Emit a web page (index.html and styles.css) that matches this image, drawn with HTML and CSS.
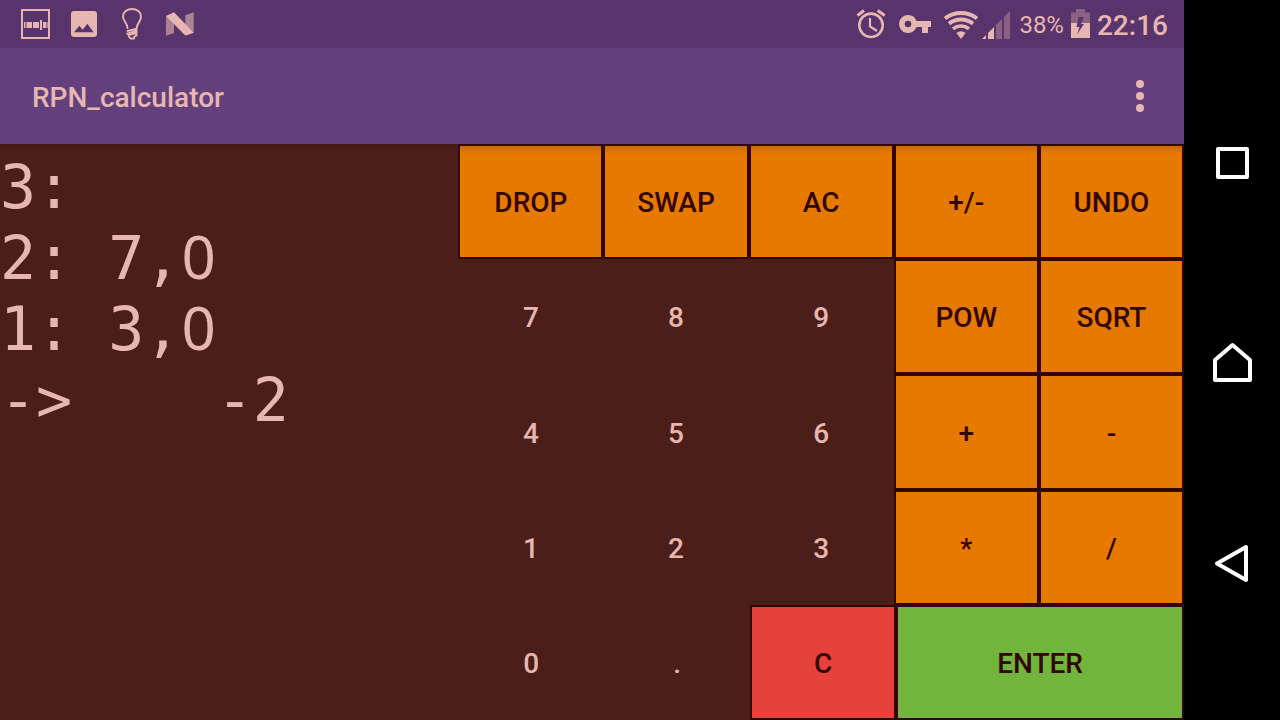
FILE: index.html
```html
<!DOCTYPE html>
<html lang="en">
<head>
<meta charset="utf-8">
<title>RPN_calculator</title>
<link rel="stylesheet" href="styles.css">
</head>
<body>
<div class="device">
  <div class="screen">
    <div class="status">
      <div class="status-group">
        <svg width="48" height="48" viewBox="0 0 48 48"><rect x="10" y="10" width="27" height="28" fill="none" stroke="currentColor" stroke-width="2"/><path fill="currentColor" d="M12 22h1v6h-1zM13.500 22h1v6h-1zM15 22h5v6h-5zM21 22h6v6h-6zM28 20h2v10h-2zM31 22h3v6h-3zM34.600 22h1v6h-1z"/></svg>
        <svg width="48" height="48" viewBox="0 0 48 48"><rect x="11" y="11" width="26" height="26" rx="3" fill="currentColor"/><path class="cut" d="M14 32.300L19.300 25.700L22.700 29.800L27.300 23.700L33.700 32.300z"/></svg>
        <svg width="48" height="48" viewBox="0 0 48 48" fill="none" stroke="currentColor" stroke-width="1.900" stroke-linecap="round"><path d="M19.500 28C19.500 22.500 15 21.500 15 16.500C15 12 19 9 24 9S33 12 33 16.500C33 21.500 29 23 28.700 28"/><path d="M19.500 31L28.500 28.800V31L19.500 33.500L20.500 35L28.500 33V35.500L26.500 36.500L26 38.500H22.500L21 36.500"/></svg>
        <svg width="48" height="48" viewBox="0 0 48 48" fill="currentColor"><path opacity=".6" d="M10 16L18 21V33L10 35.700zM29.300 15.300L37.700 12.300V32.700L29.300 27z"/><path d="M10 16L18 12.300L37.700 32.700L30.700 35.300Q29.500 35.600 28.500 34.800z"/></svg>
      </div>
      <div class="status-group">
        <svg width="44" height="48" viewBox="0 0 44 48" fill="none" stroke="currentColor" stroke-width="2.600"><circle cx="22" cy="25.300" r="11.700"/><path d="M21 18V26.500L28 31" stroke-width="2.200"/><path d="M8.500 15.500L15 10.500M28.700 10.500L35.700 15.500" stroke-width="3"/></svg>
        <svg width="44" height="48" viewBox="0 0 44 48" fill="currentColor"><path fill-rule="evenodd" d="M15 15A9 9 0 0 1 23.500 21H38V27H35V33H29V27H23.500A9 9 0 1 1 15 15zM15 20.700A3.300 3.300 0 1 0 15 27.300A3.300 3.300 0 1 0 15 20.700z"/></svg>
        <svg width="44" height="48" viewBox="0 0 44 48" fill="none" stroke="currentColor" stroke-width="4"><path d="M8 18.500A26 26 0 0 1 40 18.500"/><path d="M12 23.600A19.500 19.500 0 0 1 36 23.600" /><path d="M16 28.800A13 13 0 0 1 32 28.800" stroke-width="3.600"/><path fill="currentColor" stroke="none" d="M24 39L19.400 33.100A7.500 7.500 0 0 1 28.600 33.100z"/></svg>
        <svg width="32" height="48" viewBox="0 0 32 48" fill="currentColor"><path d="M1 39L5 35V39zM7 39V33L13 27V39z"/><path opacity=".35" d="M15 39V25L21 19V39zM23 39V17L29 11V39z"/></svg>
        <span class="percent">38%</span>
        <svg width="19" height="48" viewBox="0 0 19 48" fill="currentColor"><path opacity=".35" d="M0 12.500H5V9H14V12.500H19V23H0z"/><path d="M0 23H19V38H0z"/><path class="cut" d="M7.700 17H13L10 24H13L6 34.500L8.500 27H5.500z"/></svg>
        <span class="clock">22:16</span>
      </div>
    </div>
    <header class="appbar">
      <h1 class="title">RPN_calculator</h1>
      <button class="menu" aria-label="More options"><svg width="24" height="48" viewBox="0 0 24 48" fill="currentColor"><circle cx="12" cy="12" r="4"/><circle cx="12" cy="24" r="4"/><circle cx="12" cy="36" r="4"/></svg></button>
    </header>
    <main class="content">
      <pre class="display">3:
2: 7,<span class="zero">0</span>
1: 3,<span class="zero">0</span>
-&gt;    -2</pre>
      <div class="keypad">
        <div class="row"><button class="key op">DROP</button><button class="key op">SWAP</button><button class="key op">AC</button><button class="key op">+/-</button><button class="key op">UNDO</button></div>
        <div class="row"><button class="key">7</button><button class="key">8</button><button class="key">9</button><button class="key op">POW</button><button class="key op">SQRT</button></div>
        <div class="row"><button class="key">4</button><button class="key">5</button><button class="key">6</button><button class="key op">+</button><button class="key op">-</button></div>
        <div class="row"><button class="key">1</button><button class="key">2</button><button class="key">3</button><button class="key op">*</button><button class="key op">/</button></div>
        <div class="row row-last"><button class="key">0</button><button class="key">.</button><button class="key clear">C</button><button class="key enter">ENTER</button></div>
      </div>
    </main>
  </div>
  <nav class="navbar">
    <button class="nav-key" aria-label="Recent apps"><svg width="48" height="48" viewBox="0 0 48 48"><rect x="10" y="13" width="29" height="28"/></svg></button>
    <button class="nav-key" aria-label="Home"><svg width="48" height="48" viewBox="0 0 48 48"><path d="M7 24L24.500 9L42 24V44H7z"/></svg></button>
    <button class="nav-key" aria-label="Back"><svg width="48" height="48" viewBox="0 0 48 48"><path d="M9 27.500L38 11V44z"/></svg></button>
  </nav>
</div>
</body>
</html>
```
FILE: styles.css
```css
* {
  box-sizing: border-box;
}

body {
  margin: 0;
  background: #000;
  color: #e6b7b1;
  font-family: Roboto, "Liberation Sans", sans-serif;
}

button {
  margin: 0;
  padding: 0;
  border: 0;
  background: none;
  color: inherit;
  font: inherit;
}

svg {
  display: block;
  flex: none;
}

.device {
  display: flex;
  min-height: 100vh;
}

.screen {
  flex: 1;
  display: flex;
  flex-direction: column;
}

.status {
  display: flex;
  justify-content: space-between;
  height: 48px;
  padding: 0 16px 0 12px;
  background: #59336b;
}

.status-group {
  display: flex;
  align-items: center;
}

.cut {
  fill: #59336b;
}

.percent {
  margin: 0 7px 0 6px;
  padding-top: 2px;
  font-size: 24px;
}

.clock {
  margin-left: 7px;
  padding-top: 2px;
  font-size: 28px;
  font-weight: 500;
}

.appbar {
  display: flex;
  align-items: center;
  justify-content: space-between;
  height: 96px;
  padding: 0 32px;
  background: #633f7c;
}

.title {
  margin: 0;
  padding-top: 2px;
  font-size: 28px;
  font-weight: 500;
}

.content {
  flex: 1;
  display: flex;
  background: linear-gradient(#471a15, #4c1e19 10px);
}

.display {
  flex: 12 1 0;
  min-width: 0;
  margin: 0;
  padding-top: 8px;
  font-family: "DejaVu Sans Mono", monospace;
  font-size: 60px;
  line-height: 71px;
}

.zero {
  display: inline-block;
  width: 36px;
  font-family: "Noto Sans", sans-serif;
  line-height: 60px;
  text-align: center;
}

.keypad {
  flex: 19 1 0;
  display: flex;
  flex-direction: column;
}

.row {
  flex: 1;
  display: grid;
  grid-template-columns: repeat(5, 1fr);
}

.row-last {
  grid-template-columns: 146fr 146fr 146fr 288fr;
}

.key {
  padding-top: 2px;
  border: 2px solid transparent;
  font-size: 28px;
  font-weight: 500;
}

.op,
.clear,
.enter {
  border-color: #330500;
  color: #330500;
}

.op {
  background: #e67a00;
}

.row:first-child .op {
  background: linear-gradient(#cc6a00, #e67a00 8px);
}

.clear {
  background: #e6413b;
}

.enter {
  background: #71b53c;
}

.navbar {
  display: flex;
  flex-direction: column;
  justify-content: center;
  width: 96px;
  background: #000;
}

.nav-key {
  display: flex;
  align-items: center;
  justify-content: center;
  height: 200px;
  color: #fff;
}

.nav-key svg {
  fill: none;
  stroke: currentColor;
  stroke-width: 4;
  stroke-linejoin: round;
}
```
